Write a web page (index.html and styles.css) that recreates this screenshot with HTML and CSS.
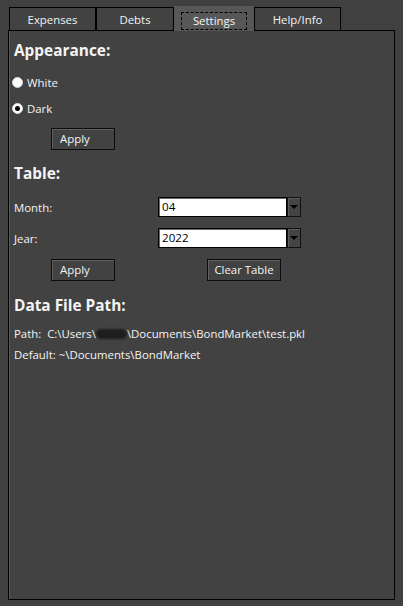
FILE: index.html
```html
<!DOCTYPE html>
<html>
<head>
<meta charset="utf-8">
<link rel="stylesheet" href="styles.css">
</head>
<body>
<div class="tabs">
  <div class="tab w-exp">Expenses</div>
  <div class="tab w-debts">Debts</div>
  <div class="tab tab-selected w-set"><span class="focus">Settings</span></div>
  <div class="tab w-help">Help/Info</div>
</div>
<div class="frame">
  <div class="heading h-app">Appearance:</div>
  <div class="radio-row r-white"><span class="radio"></span><span>White</span></div>
  <div class="radio-row r-dark"><span class="radio checked"></span><span>Dark</span></div>
  <div class="btn-row r-apply1"><div class="btn btn-apply">Apply</div></div>

  <div class="heading h-table">Table:</div>
  <div class="field-row r-month">
    <span class="label">Month:</span>
    <div class="combo"><div class="combo-field">04</div><div class="combo-arrow"><span class="tri"></span></div></div>
  </div>
  <div class="field-row r-year">
    <span class="label">Jear:</span>
    <div class="combo"><div class="combo-field">2022</div><div class="combo-arrow"><span class="tri"></span></div></div>
  </div>
  <div class="btn-row r-apply2">
    <div class="btn btn-apply">Apply</div>
    <div class="btn btn-clear">Clear Table</div>
  </div>

  <div class="heading h-data">Data File Path:</div>
  <div class="text-line t-path">Path:&nbsp; C:\Users\<span class="blur"></span>\Documents\BondMarket\test.pkl</div>
  <div class="text-line t-default">Default: ~\Documents\BondMarket</div>
</div>
</body>
</html>
```
FILE: styles.css
```css
* { box-sizing: border-box; }
html, body { margin: 0; padding: 0; }
body {
  width: 403px;
  height: 606px;
  background: #404040;
  font-family: "Open Sans", "Noto Sans", sans-serif;
  font-size: 11.4px;
  color: #f4f4f4;
  overflow: hidden;
}
.tabs {
  display: flex;
  align-items: flex-end;
  padding-left: 9px;
  height: 30px;
}
.tab {
  height: 23px;
  border: 1px solid #000;
  border-bottom: none;
  background: #424242;
  display: flex;
  align-items: center;
  justify-content: center;
  line-height: 16px;
  padding-top: 1px;
}
.w-exp { width: 87px; }
.w-debts { width: 78px; }
.w-set { width: 80px; }
.w-help { width: 87px; }
.tab-selected {
  height: 25px;
  background: #575757;
  border-color: #575757;
  position: relative;
  z-index: 2;
  margin-bottom: -1px;
}
.focus {
  width: 66px;
  height: 18px;
  border: 1px dashed #000;
  display: flex;
  align-items: center;
  justify-content: center;
  margin-top: 2px;
}
.frame {
  margin-left: 8px;
  width: 387px;
  height: 570px;
  border: 1px solid #000;
  background: #424242;
  box-shadow: inset 1px 0 0 #5a5a5a;
  padding: 0 0 0 5px;
  position: relative;
  z-index: 1;
}
.heading {
  font-weight: bold;
  font-size: 15.4px;
  line-height: 22px;
  height: 22px;
}
.h-app { margin-top: 9px; }
.h-table { margin-top: 13px; }
.h-data { margin-top: 14px; }
.radio-row {
  display: flex;
  align-items: center;
  height: 20px;
  margin-left: -2px;
  gap: 4px;
}
.r-white { margin-top: 10px; }
.r-dark { margin-top: 6px; }
.radio {
  width: 11px;
  height: 11px;
  border-radius: 50%;
  background: #fff;
  border: 1px solid #d8d8d8;
  display: flex;
  align-items: center;
  justify-content: center;
}
.radio.checked::after {
  content: "";
  width: 5px;
  height: 5px;
  border-radius: 50%;
  background: #000;
}
.btn-row {
  display: flex;
  height: 22px;
}
.r-apply1 { margin-top: 10px; padding-left: 37px; }
.r-apply2 { margin-top: 11px; padding-left: 37px; }
.btn {
  height: 22px;
  border: 1px solid #0c0c0c;
  box-shadow: inset 1px 1px 0 #606060;
  background: #424242;
  display: flex;
  align-items: center;
  justify-content: center;
  line-height: 16px;
}
.btn-apply { width: 64px; justify-content: flex-start; padding-left: 8px; }
.btn-clear { width: 74px; margin-left: 92px; }
.field-row {
  display: flex;
  align-items: center;
  height: 20px;
}
.r-month { margin-top: 12px; }
.r-year { margin-top: 11px; }
.label { width: 144px; }
.combo {
  display: flex;
  width: 143px;
  height: 20px;
}
.combo-field {
  flex: 1;
  background: #fff;
  color: #000;
  border: 1px solid #000;
  box-shadow: inset 1px 1px 0 #6a6a6a;
  padding-left: 3px;
  line-height: 17px;
  font-size: 11.6px;
}
.combo-arrow {
  width: 14px;
  background: #444;
  border: 1px solid #111;
  box-shadow: inset 1px 1px 0 #5e5e5e;
  display: flex;
  align-items: center;
  justify-content: center;
}
.tri {
  width: 0;
  height: 0;
  border-left: 4px solid transparent;
  border-right: 4px solid transparent;
  border-top: 4px solid #000;
}
.text-line {
  height: 20px;
  line-height: 20px;
  white-space: nowrap;
}
.t-path { margin-top: 7px; }
.t-default { margin-top: 1px; }
.blur {
  display: inline-block;
  width: 31px;
  height: 10px;
  background: #1e1e1e;
  border-radius: 5px;
  vertical-align: -1px;
  filter: blur(1px);
}
```
